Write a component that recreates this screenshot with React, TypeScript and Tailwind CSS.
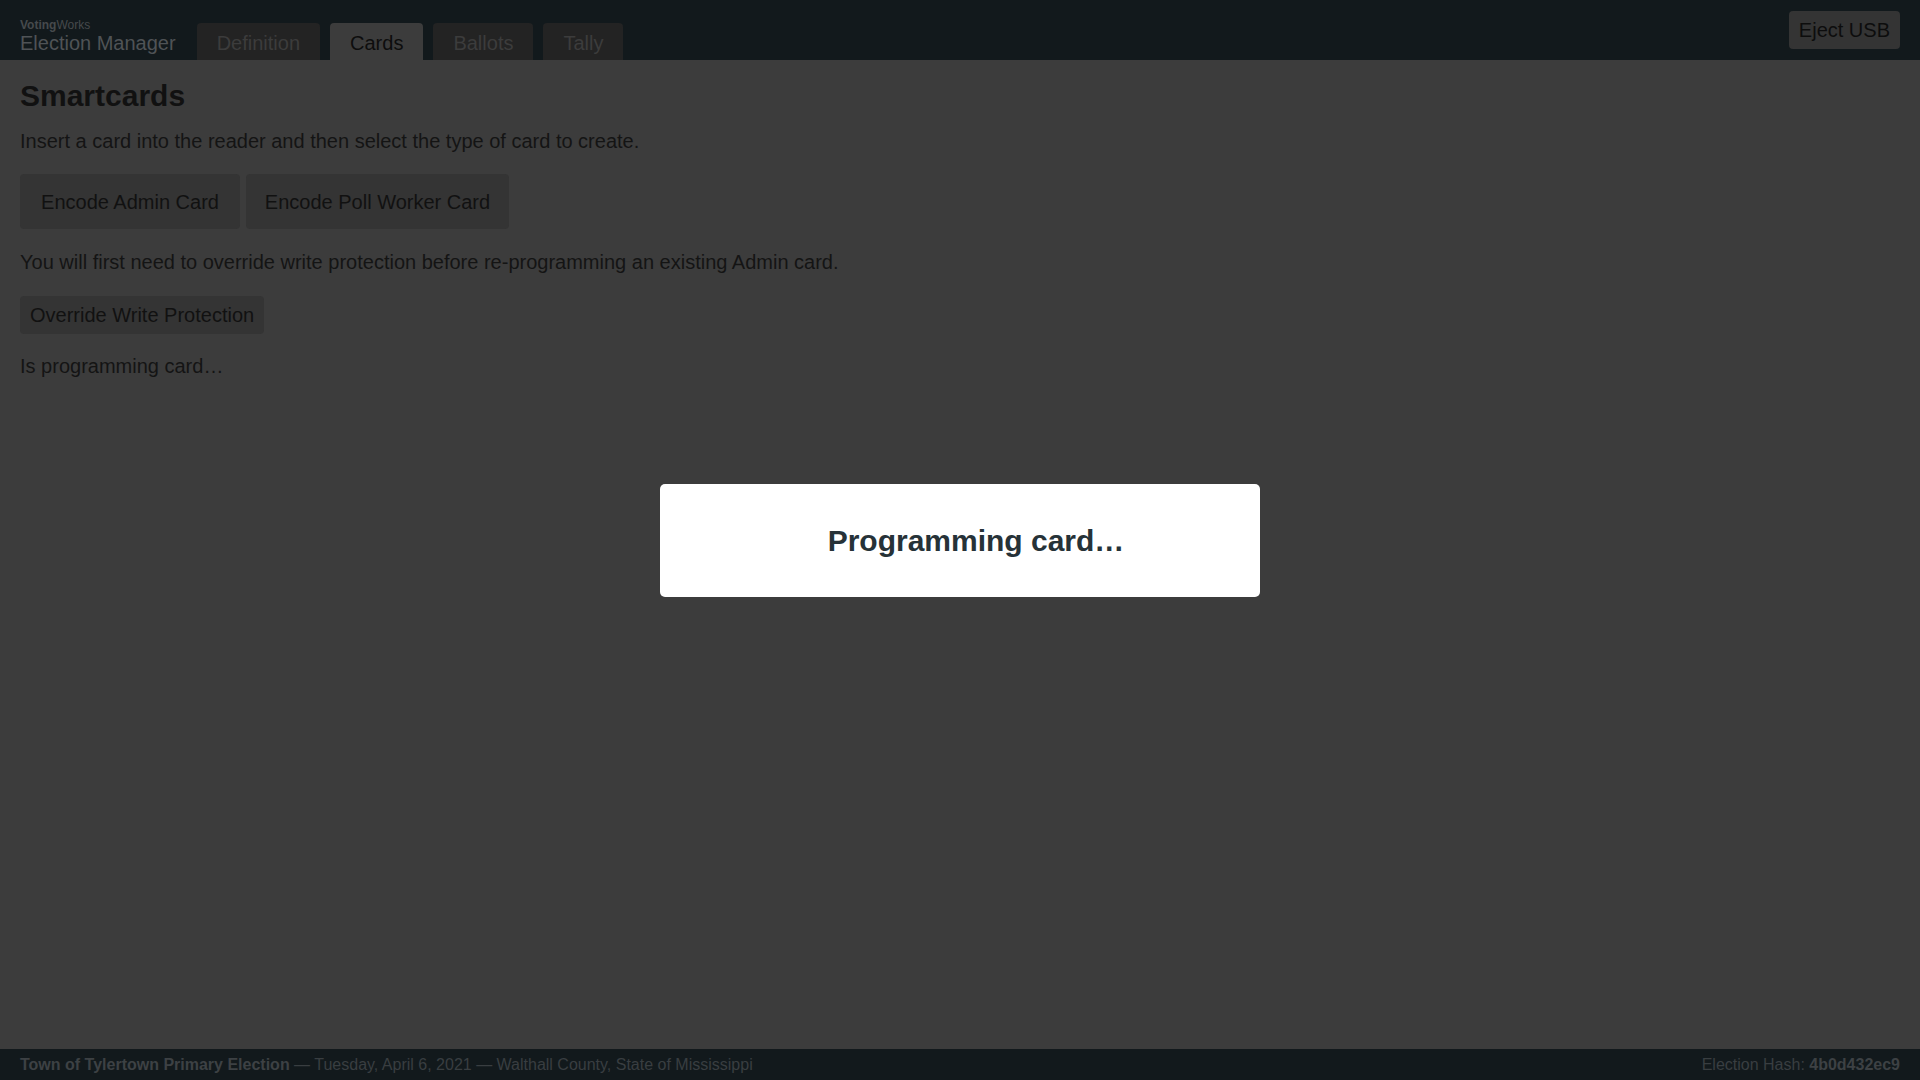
import React from 'react';

const tabs = ['Definition', 'Cards', 'Ballots', 'Tally'];

const App: React.FC = () => {
  const active = 'Cards';

  return (
    <div className="relative flex min-h-screen flex-col bg-[#3c3c3c] text-[#141414]" style={{ fontFamily: '"Liberation Sans", Arial, sans-serif' }}>
      {/* Top bar */}
      <header className="flex h-[60px] items-end bg-[#12191c] px-5">
        <div className="flex flex-col pb-[5px]">
          <div className="text-[12px] leading-[14px] text-[#464a4c]">
            <span className="font-bold">Voting</span>Works
          </div>
          <div className="text-[20px] leading-[23px] text-[#4f5356]">Election Manager</div>
        </div>
        <nav className="ml-[21px] flex gap-[10px]">
          {tabs.map(tab => (
            <div
              key={tab}
              className={
                tab === active
                  ? 'flex h-[37px] items-center rounded-t-[4px] bg-[#3c3c3c] px-5 pt-[2px] text-[20px] text-[#0d0d0d]'
                  : 'flex h-[37px] items-center rounded-t-[4px] bg-[#232323] px-5 pt-[2px] text-[20px] text-[#3c3c3c]'
              }
            >
              {tab}
            </div>
          ))}
        </nav>
        <button className="ml-auto h-[38px] self-center rounded-[4px] bg-[#343434] px-[10px] text-[20px] text-[#0d0d0d]">
          Eject USB
        </button>
      </header>

      {/* Main content */}
      <main className="flex-1 px-5">
        <h1 className="mt-[18px] text-[30px] font-bold leading-[36px] text-[#111]">Smartcards</h1>
        <p className="mt-[13px] text-[20px] leading-[28px]">
          Insert a card into the reader and then select the type of card to create.
        </p>
        <div className="mt-[19px] flex gap-[6px]">
          <button className="h-[55px] w-[220px] rounded-[4px] bg-[#343434] text-[20px] text-[#111]">Encode Admin Card</button>
          <button className="h-[55px] w-[263px] rounded-[4px] bg-[#343434] text-[20px] text-[#111]">Encode Poll Worker Card</button>
        </div>
        <p className="mt-[19px] text-[20px] leading-[28px]">
          You will first need to override write protection before re-programming an existing Admin card.
        </p>
        <button className="mt-[20px] h-[38px] rounded-[4px] bg-[#343434] px-[10px] text-[20px] text-[#111]">
          Override Write Protection
        </button>
        <p className="mt-[18px] text-[20px] leading-[28px]">Is programming card…</p>
      </main>

      {/* Footer */}
      <footer className="flex h-[31px] items-center bg-[#12191c] px-5 text-[16px] text-[#393e41]">
        <div>
          <span className="font-bold text-[#3d4144]">Town of Tylertown Primary Election</span>
          <span> — Tuesday, April 6, 2021 — Walthall County, State of Mississippi</span>
        </div>
        <div className="ml-auto">
          Election Hash: <span className="font-bold text-[#3d4144]">4b0d432ec9</span>
        </div>
      </footer>

      {/* Modal */}
      <div className="fixed inset-0 flex items-center justify-center">
        <div className="flex h-[113px] w-[600px] items-center justify-center rounded-[5px] bg-white pl-8">
          <h2 className="text-[30px] font-bold text-[#263238]">Programming card…</h2>
        </div>
      </div>
    </div>
  );
};

export default App;
